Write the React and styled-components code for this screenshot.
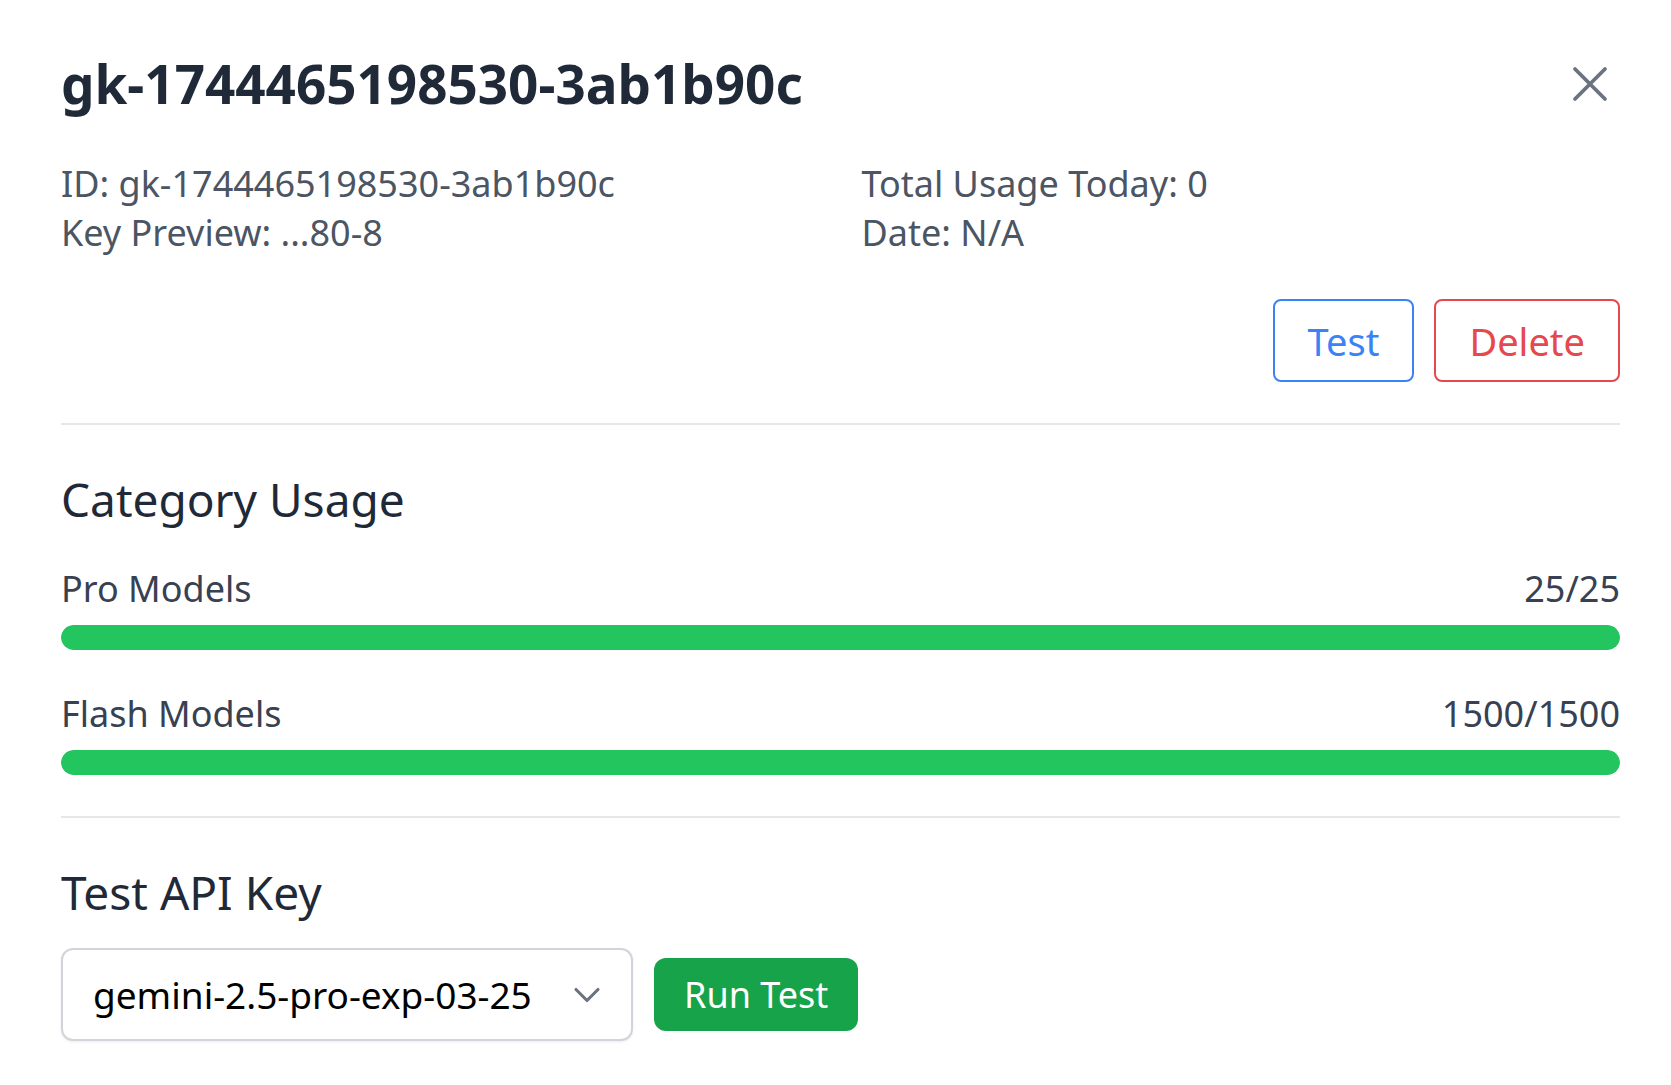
import React from 'react';
import styled, { createGlobalStyle, css } from 'styled-components';

const GlobalStyle = createGlobalStyle`
  body {
    margin: 0;
    background: #fff;
    font-family: "Noto Sans", "Open Sans", sans-serif;
  }
  * { box-sizing: border-box; }
`;

const Modal = styled.div`
  padding: 51px 51px 40px 61px;
  background: #fff;
`;

const Header = styled.div`
  display: flex;
  justify-content: space-between;
  align-items: center;
`;

const Title = styled.h2`
  margin: 0;
  font-size: 53px;
  font-weight: 700;
  line-height: 65px;
  color: #1f2937;
`;

const CloseButton = styled.button`
  display: flex;
  width: 60px;
  height: 60px;
  padding: 0;
  border: none;
  background: none;
  color: #6b7280;
  cursor: pointer;
`;

const InfoGrid = styled.div`
  display: grid;
  grid-template-columns: 1fr 1fr;
  column-gap: 42px;
  margin-top: 43px;
  font-size: 36px;
  line-height: 49px;
  color: #4b5563;
`;

const InfoLine = styled.p`
  margin: 0;
`;

const Actions = styled.div`
  display: flex;
  justify-content: flex-end;
  gap: 20px;
  margin-top: 42px;
`;

const tones = {
  blue: '#3b82f6',
  red: '#e5484d',
};

const OutlineButton = styled.button`
  height: 83px;
  padding: 0 33px;
  border-radius: 8px;
  background: #fff;
  font-family: inherit;
  font-size: 38px;
  cursor: pointer;
  ${({ $tone }) => css`
    border: 2px solid ${tones[$tone]};
    color: ${tones[$tone]};
  `}
`;

const Divider = styled.div`
  height: 2px;
  margin-top: 41px;
  background: #e5e7eb;
`;

const SectionTitle = styled.h3`
  margin: 45px 0 0;
  font-size: 46px;
  font-weight: 400;
  line-height: 58px;
  color: #1f2937;
`;

const UsageList = styled.div`
  display: flex;
  flex-direction: column;
  gap: 40px;
  margin-top: 37px;
`;

const UsageLabel = styled.div`
  display: flex;
  justify-content: space-between;
  font-size: 36px;
  line-height: 47px;
  color: #374151;
`;

const Track = styled.div`
  height: 25px;
  margin-top: 13px;
  border-radius: 999px;
  background: #e5e7eb;
  overflow: hidden;
`;

const Fill = styled.div`
  height: 100%;
  border-radius: 999px;
  background: #22c55e;
`;

const TestRow = styled.div`
  display: flex;
  align-items: center;
  gap: 21px;
  margin-top: 27px;
`;

const SelectBox = styled.div`
  display: flex;
  align-items: center;
  justify-content: space-between;
  width: 572px;
  height: 93px;
  padding: 0 22px 0 30px;
  border: 2px solid #d1d5db;
  border-radius: 12px;
  background: #fff;
  box-shadow: 0 1px 3px rgba(0, 0, 0, 0.08);
  font-size: 37px;
  color: #000;
  svg { color: #6b7280; }
`;

const RunButton = styled.button`
  height: 73px;
  padding: 0 30px;
  border: none;
  border-radius: 12px;
  background: #16a34a;
  color: #fff;
  font-family: inherit;
  font-size: 36px;
  cursor: pointer;
`;

const usage = [
  { name: 'Pro Models', used: 25, limit: 25 },
  { name: 'Flash Models', used: 1500, limit: 1500 },
];

function CloseIcon() {
  return (
    <svg width="60" height="60" viewBox="0 0 24 24" fill="none" stroke="currentColor" strokeWidth="1.5" strokeLinecap="round">
      <path d="M6 18L18 6M6 6l12 12" />
    </svg>
  );
}

function Chevron() {
  return (
    <svg width="44" height="44" viewBox="0 0 24 24" fill="none" stroke="currentColor" strokeWidth="1.7" strokeLinecap="round" strokeLinejoin="round">
      <path d="m6 9 6 6 6-6" />
    </svg>
  );
}

export default function App() {
  return (
    <>
      <GlobalStyle />
      <Modal>
        <Header>
          <Title>gk-1744465198530-3ab1b90c</Title>
          <CloseButton aria-label="Close">
            <CloseIcon />
          </CloseButton>
        </Header>

        <InfoGrid>
          <div>
            <InfoLine>ID: gk-1744465198530-3ab1b90c</InfoLine>
            <InfoLine>Key Preview: ...80-8</InfoLine>
          </div>
          <div>
            <InfoLine>Total Usage Today: 0</InfoLine>
            <InfoLine>Date: N/A</InfoLine>
          </div>
        </InfoGrid>

        <Actions>
          <OutlineButton $tone="blue">Test</OutlineButton>
          <OutlineButton $tone="red">Delete</OutlineButton>
        </Actions>

        <Divider />

        <SectionTitle>Category Usage</SectionTitle>
        <UsageList>
          {usage.map((u) => (
            <div key={u.name}>
              <UsageLabel>
                <span>{u.name}</span>
                <span>{u.used}/{u.limit}</span>
              </UsageLabel>
              <Track>
                <Fill style={{ width: `${Math.min(100, (u.used / u.limit) * 100)}%` }} />
              </Track>
            </div>
          ))}
        </UsageList>

        <Divider />

        <SectionTitle>Test API Key</SectionTitle>
        <TestRow>
          <SelectBox>
            <span>gemini-2.5-pro-exp-03-25</span>
            <Chevron />
          </SelectBox>
          <RunButton>Run Test</RunButton>
        </TestRow>
      </Modal>
    </>
  );
}
